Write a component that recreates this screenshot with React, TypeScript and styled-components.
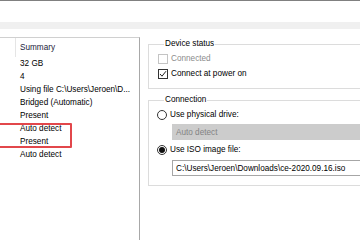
import React from "react";
import styled, { createGlobalStyle } from "styled-components";

const GlobalStyle = createGlobalStyle`
  html, body { margin: 0; padding: 0; background: #ffffff; }
  body { font-family: "Liberation Sans", Arial, sans-serif; font-size: 8.2px; color: #000; }
  * { box-sizing: border-box; }
`;

const Frame = styled.div`
  width: 360px;
  height: 240px;
  overflow: hidden;
  background: #fff;
  border-top: 1px solid #808080;
  display: flex;
  flex-direction: column;
`;

const TitleArea = styled.div`
  height: 21px;
  flex: none;
`;

const TabBand = styled.div`
  height: 7px;
  flex: none;
  background: #f0f0f0;
`;

const Content = styled.div`
  flex: 1;
  display: flex;
  padding-top: 8px;
  min-height: 0;
`;

const ListPanel = styled.div`
  width: 140px;
  flex: none;
  border-top: 1px solid #d0d0d0;
  border-right: 1px solid #a8a8a8;
  display: flex;
  flex-direction: column;
`;

const HeaderRow = styled.div`
  height: 19px;
  display: flex;
  align-items: stretch;
`;

const HeaderCell = styled.div<{ $w?: number }>`
  width: ${(p) => (p.$w ? `${p.$w}px` : "auto")};
  flex: ${(p) => (p.$w ? "none" : "1")};
  display: flex;
  align-items: center;
  padding-left: 4px;
  border-right: ${(p) => (p.$w ? "1px solid #e5e5e5" : "none")};
  color: #1a1a3a;
`;

const Rows = styled.div`
  position: relative;
`;

const Row = styled.div`
  height: 13px;
  line-height: 13px;
  padding-left: 20px;
  white-space: nowrap;
`;

const Highlight = styled.div`
  position: absolute;
  left: -4px;
  top: 66px;
  width: 76px;
  height: 25px;
  border: 2px solid #e2474b;
  border-radius: 1px;
  pointer-events: none;
`;

const RightColumn = styled.div`
  width: 240px;
  flex: none;
  margin-left: 8px;
  padding-top: 2px;
  display: flex;
  flex-direction: column;
  gap: 6px;
`;

const Group = styled.fieldset`
  margin: 0;
  padding: 2px 0 7px 9px;
  border: 1px solid #dcdcdc;
  display: flex;
  flex-direction: column;
  min-width: 0;
`;

const Legend = styled.legend`
  margin-left: 6px;
  padding: 0 1px;
  line-height: 10px;
  height: 10px;
`;

const OptionRow = styled.div<{ $disabled?: boolean }>`
  height: 15px;
  display: flex;
  align-items: center;
  gap: 3px;
  color: ${(p) => (p.$disabled ? "#8c8c8c" : "#000")};
  white-space: nowrap;
`;

const Check = styled.span<{ $disabled?: boolean }>`
  width: 10px;
  height: 10px;
  flex: none;
  border: 1px solid ${(p) => (p.$disabled ? "#c4c4c4" : "#333")};
  background: #fff;
  display: flex;
  align-items: center;
  justify-content: center;
`;

const Radio = styled.span<{ $on?: boolean }>`
  width: 10px;
  height: 10px;
  flex: none;
  border-radius: 50%;
  border: 1px solid #333;
  background: #fff;
  display: flex;
  align-items: center;
  justify-content: center;
  margin-left: -1px;
  &::after {
    content: "";
    display: ${(p) => (p.$on ? "block" : "none")};
    width: 6px;
    height: 6px;
    border-radius: 50%;
    background: #111;
  }
`;

const Field = styled.div<{ $disabled?: boolean }>`
  height: 16px;
  margin-left: 14px;
  padding-left: 3px;
  display: flex;
  align-items: center;
  white-space: nowrap;
  background: ${(p) => (p.$disabled ? "#cccccc" : "#fff")};
  border: 1px solid ${(p) => (p.$disabled ? "#cccccc" : "#a6a6a6")};
  color: ${(p) => (p.$disabled ? "#838383" : "#000")};
  margin-top: ${(p) => (p.$disabled ? "2px" : "3px")};
  margin-bottom: 2px;
`;

const CheckMark = () => (
  <svg width="8" height="8" viewBox="0 0 8 8">
    <polyline points="1,4 3,6.2 7,1.2" fill="none" stroke="#222" strokeWidth="1" />
  </svg>
);

const summaries = [
  "32 GB",
  "4",
  "Using file C:\\Users\\Jeroen\\D...",
  "Bridged (Automatic)",
  "Present",
  "Auto detect",
  "Present",
  "Auto detect",
];

export default function App() {
  return (
    <>
      <GlobalStyle />
      <Frame>
        <TitleArea />
        <TabBand />
        <Content>
          <ListPanel>
            <HeaderRow>
              <HeaderCell $w={16} />
              <HeaderCell>Summary</HeaderCell>
            </HeaderRow>
            <Rows>
              {summaries.map((s, i) => (
                <Row key={i}>{s}</Row>
              ))}
              <Highlight />
            </Rows>
          </ListPanel>
          <RightColumn>
            <Group>
              <Legend>Device status</Legend>
              <OptionRow $disabled>
                <Check $disabled />
                Connected
              </OptionRow>
              <OptionRow>
                <Check>
                  <CheckMark />
                </Check>
                Connect at power on
              </OptionRow>
            </Group>
            <Group>
              <Legend>Connection</Legend>
              <OptionRow>
                <Radio />
                Use physical drive:
              </OptionRow>
              <Field $disabled>Auto detect</Field>
              <OptionRow>
                <Radio $on />
                Use ISO image file:
              </OptionRow>
              <Field>C:\Users\Jeroen\Downloads\ce-2020.09.16.iso</Field>
            </Group>
          </RightColumn>
        </Content>
      </Frame>
    </>
  );
}
